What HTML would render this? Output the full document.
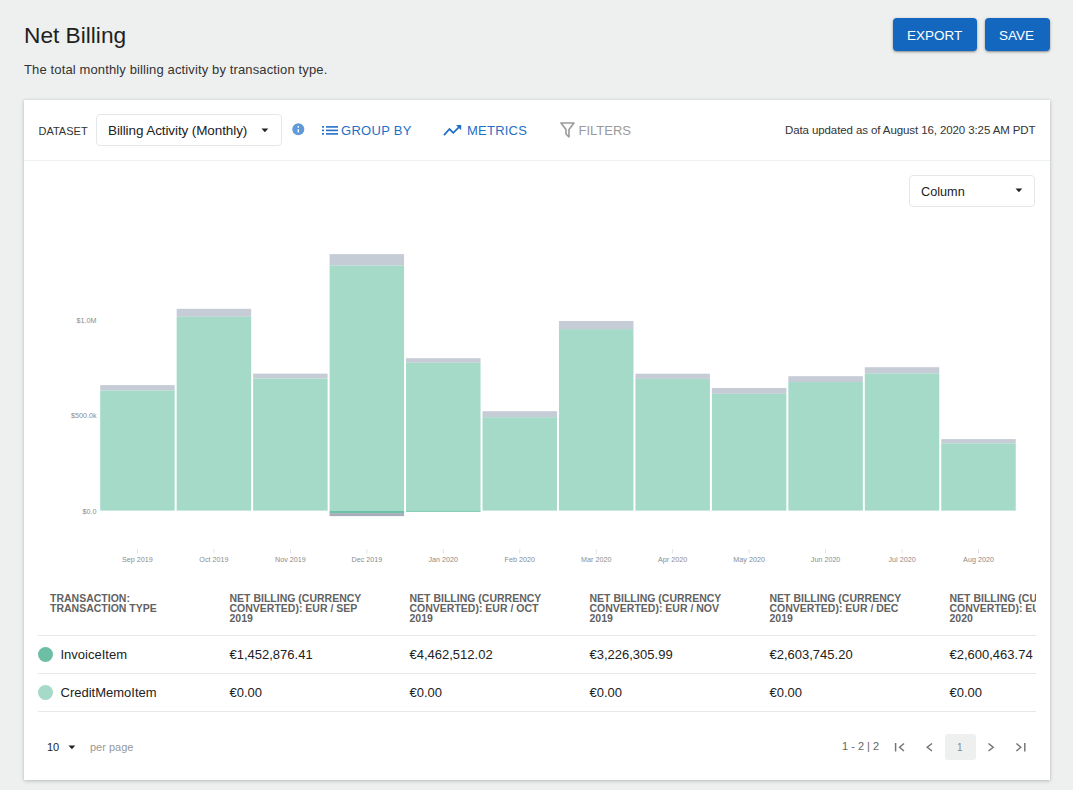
<!DOCTYPE html>
<html><head><meta charset="utf-8">
<style>
*{box-sizing:border-box;margin:0;padding:0}
html,body{width:1073px;height:790px;overflow:hidden;background:#eef0ef;font-family:"Liberation Sans",sans-serif;color:#222}
.a{position:absolute;white-space:nowrap;line-height:1}
.btn{position:absolute;top:18px;height:33px;background:#1467be;border-radius:4px;box-shadow:0 1px 2px rgba(0,0,0,.35),0 1px 4px rgba(0,0,0,.12);color:#fff;font-size:13.5px;letter-spacing:0px}
.btn span{position:absolute;line-height:1}
#card{position:absolute;left:24px;top:100px;width:1026px;height:680px;background:#fff;box-shadow:0 1px 4px rgba(0,0,0,.2),0 0 1px rgba(0,0,0,.15)}
.dd{position:absolute;border:1px solid #e6e7ea;border-radius:4px;background:#fff}
.blue{color:#1f6fc5}
.lab{font-size:7.2px;fill:#8c8c8c;font-family:"Liberation Sans",sans-serif}
.hd{font-size:10.5px;font-weight:bold;color:#626262;line-height:10px}
.cell{font-size:13px;color:#222}
.hr{position:absolute;height:1px;background:#e6e8ea}
#clip{position:absolute;left:24px;top:580px;width:1012px;height:140px;overflow:hidden}
</style></head><body>
<div class="a" style="left:24px;top:24px;font-size:22.7px;color:#1f1f1f">Net Billing</div>
<div class="a" style="left:24px;top:63px;font-size:13px;letter-spacing:.13px;color:#333">The total monthly billing activity by transaction type.</div>
<div class="btn" style="left:893px;width:84px"><span style="left:14px;top:11px">EXPORT</span></div>
<div class="btn" style="left:985px;width:65px"><span style="left:14px;top:11px">SAVE</span></div>
<div id="card"></div>
<div class="hr" style="left:24px;top:160px;width:1026px;background:#eef0f0"></div>
<div class="a" style="left:38.5px;top:125.5px;font-size:11px;color:#333">DATASET</div>
<div class="dd" style="left:96px;top:114px;width:186px;height:32px"></div>
<div class="a" style="left:108px;top:124px;font-size:13.5px;letter-spacing:-.1px;color:#222">Billing Activity (Monthly)</div>
<svg class="a" style="left:261px;top:128px" width="8" height="5" viewBox="0 0 8 5"><path d="M0.5 0.5 H7.3 L3.9 4.3 Z" fill="#222"/></svg>
<svg class="a" style="left:292px;top:123px" width="13" height="13" viewBox="0 0 13 13"><circle cx="6.3" cy="6.3" r="6" fill="#5f9bd8"/><rect x="5.6" y="3" width="1.4" height="1.7" fill="#fff"/><rect x="5.6" y="6.2" width="1.4" height="3.2" fill="#fff"/></svg>
<svg class="a" style="left:322px;top:126px" width="17" height="10" viewBox="0 0 17 10"><g fill="#1f6fc5"><rect x="0" y="0.1" width="2" height="1.6"/><rect x="0" y="3.6" width="2" height="1.6"/><rect x="0" y="7.1" width="2" height="1.6"/><rect x="4" y="0.1" width="12" height="1.6"/><rect x="4" y="3.6" width="12" height="1.6"/><rect x="4" y="7.1" width="12" height="1.6"/></g></svg>
<div class="a blue" style="left:341px;top:124px;font-size:13px;letter-spacing:.3px">GROUP BY</div>
<svg class="a" style="left:443px;top:124px" width="19" height="12" viewBox="0 0 19 12"><path d="M1 11.1 L6.5 5 L10.3 8.8 L16 3.2" fill="none" stroke="#1f6fc5" stroke-width="1.8"/><path d="M13 1 H18.2 V6.2 Z" fill="#1f6fc5"/></svg>
<div class="a blue" style="left:467px;top:124px;font-size:13px;letter-spacing:.23px">METRICS</div>
<svg class="a" style="left:560px;top:122px" width="15" height="16" viewBox="0 0 15 16"><path d="M1 1 H14 L9 7.5 V15 L6 12 V7.5 Z" fill="none" stroke="#9a9a9a" stroke-width="1.6" stroke-linejoin="round"/></svg>
<div class="a" style="left:578.5px;top:124px;font-size:13px;letter-spacing:0px;color:#9a9a9a">FILTERS</div>
<div class="a" style="left:785px;top:125px;font-size:11.5px;letter-spacing:-.1px;color:#333">Data updated as of August 16, 2020 3:25 AM PDT</div>

<div class="dd" style="left:909px;top:175px;width:126px;height:32px"></div>
<div class="a" style="left:921px;top:186px;font-size:12.7px;color:#222">Column</div>
<svg class="a" style="left:1015px;top:188px" width="8" height="5" viewBox="0 0 8 5"><path d="M0.5 0.5 H7.3 L3.9 4.3 Z" fill="#222"/></svg>

<svg class="a" style="left:0;top:0" width="1073" height="790">
<rect x="100.20" y="385.10" width="74.5" height="5.40" fill="#c6ccd6"/>
<rect x="100.20" y="390.50" width="74.5" height="120.10" fill="#a5d9c8"/>
<rect x="136.95" y="549" width="1" height="4.5" fill="#dfe3ea"/>
<text x="137.45" y="562" text-anchor="middle" class="lab">Sep 2019</text>
<rect x="176.66" y="308.80" width="74.5" height="8.00" fill="#c6ccd6"/>
<rect x="176.66" y="316.80" width="74.5" height="193.80" fill="#a5d9c8"/>
<rect x="213.41" y="549" width="1" height="4.5" fill="#dfe3ea"/>
<text x="213.91" y="562" text-anchor="middle" class="lab">Oct 2019</text>
<rect x="253.12" y="373.60" width="74.5" height="5.00" fill="#c6ccd6"/>
<rect x="253.12" y="378.60" width="74.5" height="132.00" fill="#a5d9c8"/>
<rect x="289.87" y="549" width="1" height="4.5" fill="#dfe3ea"/>
<text x="290.37" y="562" text-anchor="middle" class="lab">Nov 2019</text>
<rect x="329.58" y="254.10" width="74.5" height="11.40" fill="#c6ccd6"/>
<rect x="329.58" y="265.50" width="74.5" height="245.10" fill="#a5d9c8"/>
<rect x="366.33" y="549" width="1" height="4.5" fill="#dfe3ea"/>
<text x="366.83" y="562" text-anchor="middle" class="lab">Dec 2019</text>
<rect x="406.04" y="358.20" width="74.5" height="4.60" fill="#c6ccd6"/>
<rect x="406.04" y="362.80" width="74.5" height="147.80" fill="#a5d9c8"/>
<rect x="442.79" y="549" width="1" height="4.5" fill="#dfe3ea"/>
<text x="443.29" y="562" text-anchor="middle" class="lab">Jan 2020</text>
<rect x="482.50" y="411.20" width="74.5" height="6.00" fill="#c6ccd6"/>
<rect x="482.50" y="417.20" width="74.5" height="93.40" fill="#a5d9c8"/>
<rect x="519.25" y="549" width="1" height="4.5" fill="#dfe3ea"/>
<text x="519.75" y="562" text-anchor="middle" class="lab">Feb 2020</text>
<rect x="558.96" y="321.00" width="74.5" height="8.10" fill="#c6ccd6"/>
<rect x="558.96" y="329.10" width="74.5" height="181.50" fill="#a5d9c8"/>
<rect x="595.71" y="549" width="1" height="4.5" fill="#dfe3ea"/>
<text x="596.21" y="562" text-anchor="middle" class="lab">Mar 2020</text>
<rect x="635.42" y="373.70" width="74.5" height="5.20" fill="#c6ccd6"/>
<rect x="635.42" y="378.90" width="74.5" height="131.70" fill="#a5d9c8"/>
<rect x="672.17" y="549" width="1" height="4.5" fill="#dfe3ea"/>
<text x="672.67" y="562" text-anchor="middle" class="lab">Apr 2020</text>
<rect x="711.88" y="388.00" width="74.5" height="5.80" fill="#c6ccd6"/>
<rect x="711.88" y="393.80" width="74.5" height="116.80" fill="#a5d9c8"/>
<rect x="748.63" y="549" width="1" height="4.5" fill="#dfe3ea"/>
<text x="749.13" y="562" text-anchor="middle" class="lab">May 2020</text>
<rect x="788.34" y="376.20" width="74.5" height="5.80" fill="#c6ccd6"/>
<rect x="788.34" y="382.00" width="74.5" height="128.60" fill="#a5d9c8"/>
<rect x="825.09" y="549" width="1" height="4.5" fill="#dfe3ea"/>
<text x="825.59" y="562" text-anchor="middle" class="lab">Jun 2020</text>
<rect x="864.80" y="367.20" width="74.5" height="6.20" fill="#c6ccd6"/>
<rect x="864.80" y="373.40" width="74.5" height="137.20" fill="#a5d9c8"/>
<rect x="901.55" y="549" width="1" height="4.5" fill="#dfe3ea"/>
<text x="902.05" y="562" text-anchor="middle" class="lab">Jul 2020</text>
<rect x="941.26" y="439.10" width="74.5" height="4.30" fill="#c6ccd6"/>
<rect x="941.26" y="443.40" width="74.5" height="67.20" fill="#a5d9c8"/>
<rect x="978.01" y="549" width="1" height="4.5" fill="#dfe3ea"/>
<text x="978.51" y="562" text-anchor="middle" class="lab">Aug 2020</text>
<rect x="329.58" y="510.60" width="74.5" height="2.5" fill="#6cc2a8"/>
<rect x="329.58" y="513.10" width="74.5" height="3" fill="#a7adb9"/>
<rect x="406.04" y="510.60" width="74.5" height="1.2" fill="#6cc2a8"/>
<text x="96.5" y="322.8" text-anchor="end" class="lab">$1.0M</text>
<text x="96.5" y="418.3" text-anchor="end" class="lab">$500.0k</text>
<text x="96.5" y="513.6" text-anchor="end" class="lab">$0.0</text>
</svg>

<div class="a hd" style="left:50px;top:593px">TRANSACTION:<br>TRANSACTION TYPE</div>
<div id="clip"><div class="a" style="left:-24px;top:-580px;width:1073px;height:790px">
<div class="a hd" style="left:229.5px;top:593px">NET BILLING (CURRENCY<br>CONVERTED): EUR / SEP<br>2019</div>
<div class="a cell" style="left:229.5px;top:648px">€1,452,876.41</div>
<div class="a cell" style="left:229.5px;top:686px">€0.00</div>
<div class="a hd" style="left:409.5px;top:593px">NET BILLING (CURRENCY<br>CONVERTED): EUR / OCT<br>2019</div>
<div class="a cell" style="left:409.5px;top:648px">€4,462,512.02</div>
<div class="a cell" style="left:409.5px;top:686px">€0.00</div>
<div class="a hd" style="left:589.5px;top:593px">NET BILLING (CURRENCY<br>CONVERTED): EUR / NOV<br>2019</div>
<div class="a cell" style="left:589.5px;top:648px">€3,226,305.99</div>
<div class="a cell" style="left:589.5px;top:686px">€0.00</div>
<div class="a hd" style="left:769.5px;top:593px">NET BILLING (CURRENCY<br>CONVERTED): EUR / DEC<br>2019</div>
<div class="a cell" style="left:769.5px;top:648px">€2,603,745.20</div>
<div class="a cell" style="left:769.5px;top:686px">€0.00</div>
<div class="a hd" style="left:949.5px;top:593px">NET BILLING (CURRENCY<br>CONVERTED): EUR / JAN<br>2020</div>
<div class="a cell" style="left:949.5px;top:648px">€2,600,463.74</div>
<div class="a cell" style="left:949.5px;top:686px">€0.00</div>
</div></div>
<div class="hr" style="left:38px;top:635px;width:998px"></div>
<div class="hr" style="left:38px;top:673px;width:998px"></div>
<div class="hr" style="left:38px;top:711px;width:998px"></div>
<div class="a" style="left:38px;top:647px;width:15px;height:15px;border-radius:50%;background:#6cbfa5"></div>
<div class="a" style="left:38px;top:685px;width:15px;height:15px;border-radius:50%;background:#a5d9c8"></div>
<div class="a cell" style="left:60.5px;top:648px">InvoiceItem</div>
<div class="a cell" style="left:60.5px;top:686px">CreditMemoItem</div>

<div class="a" style="left:47px;top:742px;font-size:11px;color:#222">10</div>
<svg class="a" style="left:67.5px;top:744.5px" width="8" height="5" viewBox="0 0 8 5"><path d="M0.5 0.5 H7.3 L3.9 4.3 Z" fill="#222"/></svg>
<div class="a" style="left:90px;top:742px;font-size:11px;color:#999">per page</div>
<div class="a" style="left:842px;top:741px;font-size:11px;color:#666">1 - 2 | 2</div>
<div class="a" style="left:945px;top:734px;width:31px;height:26px;border-radius:3px;background:#eef0ef"></div>
<div class="a" style="left:957px;top:743px;font-size:10px;color:#888">1</div>
<svg class="a" style="left:0;top:0" width="1073" height="790"><g fill="none" stroke="#737373" stroke-width="1.45">
<path d="M895.6 743 V751.5 M904 743.5 L899.6 747.3 L904 751"/>
<path d="M932 743.5 L927.2 747.3 L932 751"/>
<path d="M988.5 743.5 L993.2 747.3 L988.5 751"/>
<path d="M1016.4 743.5 L1020.8 747.3 L1016.4 751 M1024.8 743 V751.5"/>
</g></svg>
</body></html>
